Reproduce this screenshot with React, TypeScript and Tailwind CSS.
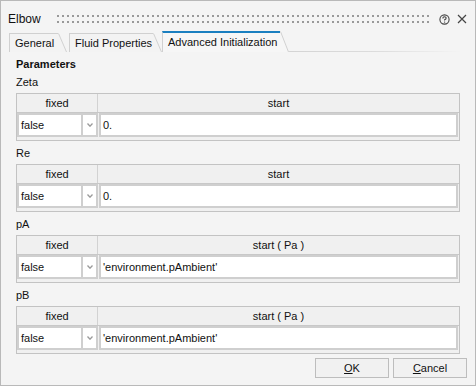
import React from "react";

type Param = { name: string; unit?: string; value: string };

const params: Param[] = [
  { name: "Zeta", value: "0." },
  { name: "Re", value: "0." },
  { name: "pA", unit: "Pa", value: "'environment.pAmbient'" },
  { name: "pB", unit: "Pa", value: "'environment.pAmbient'" },
];

function Grip() {
  return (
    <svg className="flex-1 h-[8px] ml-[16px] mr-[10px]" shapeRendering="crispEdges">
      <defs>
        <pattern id="grip" width="5" height="6" patternUnits="userSpaceOnUse">
          <rect x="0" y="0" width="2" height="2" fill="#999999" />
        </pattern>
      </defs>
      <rect x="0" y="0" width="100%" height="8" fill="url(#grip)" />
    </svg>
  );
}

function Tab({ label, active, width }: { label: string; active?: boolean; width: number }) {
  return (
    <div className={`flex items-stretch ${active ? "h-[21px]" : "h-[19px] mt-[2px]"}`}>
      <div
        className={`flex items-center pl-[5px] border-l ${
          active
            ? "border-t-2 border-t-[#1a7fc0] border-l-[#d0d0d0] bg-[#f6f6f6]"
            : "border-t border-[#d0d0d0] bg-[#f3f3f3]"
        }`}
        style={{ width }}
      >
        {label}
      </div>
      <svg width="9" className="h-full block" viewBox="0 0 9 21" preserveAspectRatio="none">
        <polygon points="0,0 1,0 9,21 0,21" fill={active ? "#f6f6f6" : "#f3f3f3"} />
        <line x1="0.5" y1="0.5" x2="8.5" y2="21" stroke="#d0d0d0" strokeWidth="1" />
      </svg>
    </div>
  );
}

function ParamTable({ p }: { p: Param }) {
  return (
    <div className="border border-[#c3c3c3] bg-[#f0f0f0] pb-[3px] w-[444px]">
      <div className="flex h-[19px] border-b border-[#c8c8c8]">
        <div className="w-[81px] border-r border-[#d2d2d2] flex items-center justify-center">fixed</div>
        <div className="flex-1 flex items-center justify-center">
          {p.unit ? `start ( ${p.unit} )` : "start"}
        </div>
      </div>
      <div className="flex h-[24px]">
        <div className="w-[66px] bg-white border-2 border-[#cfcfcf] flex items-center pl-[2px]">false</div>
        <div className="w-[15px] bg-white border-y-2 border-r-2 border-[#cfcfcf] flex items-center justify-center">
          <svg width="6" height="4" viewBox="0 0 6 4">
            <path d="M0.5 0.5 L3 3.2 L5.5 0.5" fill="none" stroke="#9a9a9a" strokeWidth="1.3" />
          </svg>
        </div>
        <div className="flex-1 ml-[1px] mr-[1px] bg-white border-2 border-[#cfcfcf] flex items-center pl-[2px]">
          {p.value}
        </div>
      </div>
    </div>
  );
}

export default function App() {
  return (
    <div
      className="w-[476px] h-[386px] bg-[#f4f4f4] border border-[#b9b9b9] flex flex-col text-[11px] text-[#111]"
      style={{ fontFamily: '"Liberation Sans", Arial, sans-serif' }}
    >
      <div className="flex items-center h-[20px] mt-[8px] pl-[7px] pr-[8px]">
        <span className="text-[12px]">Elbow</span>
        <Grip />
        <svg width="11" height="11" viewBox="0 0 11 11" className="mr-[7px]">
          <circle cx="5.5" cy="5.5" r="4.6" fill="none" stroke="#444" strokeWidth="1.1" />
          <path d="M3.9 4.4 Q3.9 2.8 5.5 2.8 Q7.1 2.8 7.1 4.2 Q7.1 5.1 5.6 5.8 L5.6 6.6" fill="none" stroke="#444" strokeWidth="1.1" />
          <circle cx="5.6" cy="8.1" r="0.7" fill="#444" />
        </svg>
        <svg width="10" height="10" viewBox="0 0 10 10">
          <path d="M1 1 L9 9 M9 1 L1 9" stroke="#444" strokeWidth="1.2" />
        </svg>
      </div>
      <div className="flex items-end mt-[2px] pl-[8px]">
        <Tab label="General" width={49} />
        <div className="w-[2px]" />
        <Tab label="Fluid Properties" width={84} />
        <Tab label="Advanced Initialization" active width={118} />
        <div className="flex-1 h-px bg-gradient-to-r from-[#d4d4d4] via-[#dcdcdc] to-transparent mr-[14px]" />
      </div>
      <div className="flex flex-col pl-[15px] pt-[5px]">
        <div className="font-bold text-[11px] leading-[15px]">Parameters</div>
        {params.map((p, i) => (
          <div key={p.name} className={`flex flex-col ${i === 0 ? "mt-[3px]" : "mt-[5px]"}`}>
            <div className="leading-[15px] mb-[3px]">{p.name}</div>
            <ParamTable p={p} />
          </div>
        ))}
      </div>
      <div className="flex justify-end gap-[4px] pr-[8px] mt-auto mb-[7px]">
        <button className="w-[74px] h-[20px] border border-[#bdbdbd] bg-[#f1f1f1]">
          <span className="underline">O</span>K
        </button>
        <button className="w-[74px] h-[20px] border border-[#bdbdbd] bg-[#f1f1f1]">
          <span className="underline">C</span>ancel
        </button>
      </div>
    </div>
  );
}
